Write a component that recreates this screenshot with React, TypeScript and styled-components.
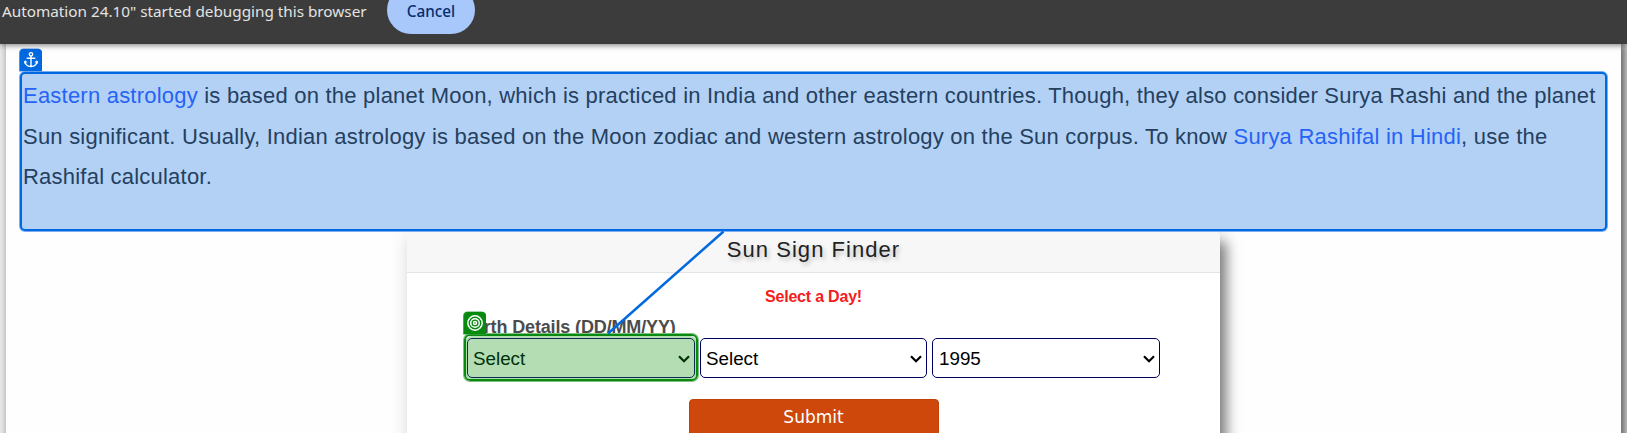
import React from "react";
import styled, { createGlobalStyle, css } from "styled-components";

const GlobalStyle = createGlobalStyle`
  * { box-sizing: border-box; }
  html, body { margin: 0; height: 433px; overflow: hidden; background: #ececec; }
  body { font-family: "Liberation Sans", Arial, sans-serif; }
`;

const Screen = styled.div`
  position: relative;
  display: flex;
  flex-direction: column;
  width: 1627px;
  height: 433px;
  overflow: hidden;
`;

const DebugBar = styled.header`
  position: relative;
  z-index: 3;
  flex: 0 0 44px;
  display: flex;
  align-items: flex-start;
  gap: 21px;
  padding-left: 2px;
  background: #3c3c3c;
  box-shadow: 0 1px 6px rgba(0, 0, 0, 0.55);
  font-family: "Noto Sans", "Open Sans", sans-serif;
`;

const DebugText = styled.span`
  width: 364px;
  line-height: 22px;
  font-size: 15.3px;
  letter-spacing: -0.01px;
  color: #e3e3e3;
  white-space: nowrap;
`;

const CancelButton = styled.button`
  width: 88px;
  height: 48px;
  margin-top: -14px;
  padding: 2px 0 0;
  border: 0;
  border-radius: 24px;
  background: #a8c7fa;
  color: #062e6f;
  font: 500 15.3px "Noto Sans", "Open Sans", sans-serif;
`;

const Page = styled.main`
  flex: 1;
  margin: 0 6px;
  padding: 27px 13px 0;
  background: #fefefe;
  box-shadow: 0 0 8px rgba(0, 0, 0, 0.22), 5px 0 9px rgba(0, 0, 0, 0.5);
`;

const AnchorRegion = styled.section`
  position: relative;
  z-index: 2;
  height: 161px;
  padding: 1px;
  border-radius: 6px;
  background: #79aef0;
`;

const AnchorFill = styled.div`
  height: 159px;
  padding: 2px 0 0 1px;
  border: 2px solid #0068e0;
  border-radius: 5px;
  background: #b3d1f5;
`;

const Intro = styled.p`
  margin: 0;
  font-size: 22px;
  line-height: 40.5px;
  letter-spacing: 0.219px;
  color: #24405f;
  white-space: nowrap;
`;

const TextLink = styled.a`
  color: #2563f5;
`;

const Tag = styled.span<{ $color: string; $edge: string; $top: number; $left: number }>`
  position: absolute;
  z-index: 3;
  top: ${(p) => p.$top}px;
  left: ${(p) => p.$left}px;
  width: 22px;
  height: 22px;
  display: grid;
  place-items: center;
  border-radius: 4px 4px 0 0;
  background: ${(p) => p.$color};
  box-shadow: -0.5px 0 0 0.5px ${(p) => p.$edge};
`;

const Card = styled.section`
  width: 813px;
  height: 300px;
  margin: -1px auto 0 388px;
  border-radius: 6px;
  background: #fff;
  box-shadow: 4px 4px 20px rgba(0, 0, 0, 0.22), 10px 8px 12px -4px rgba(0, 0, 0, 0.4);
`;

const CardHeader = styled.h2`
  height: 42px;
  margin: 0;
  border-bottom: 1px solid #e4e4e4;
  border-radius: 6px 6px 0 0;
  background: #f7f7f7;
  font-size: 22px;
  font-weight: 400;
  line-height: 37px;
  letter-spacing: 1.05px;
  text-align: center;
  color: #212121;
  text-shadow: 2px 3px 4px rgba(0, 0, 0, 0.22);
`;

const ErrorText = styled.p`
  margin: 14px 0 0;
  font-size: 16px;
  font-weight: 700;
  line-height: 20px;
  letter-spacing: -0.2px;
  text-align: center;
  color: #f32020;
`;

const FieldLabel = styled.label`
  display: block;
  margin: 9px 0 0 59px;
  font-size: 18px;
  font-weight: 700;
  line-height: 22px;
  letter-spacing: -0.14px;
  color: #4c4c4c;
`;

const Fields = styled.div`
  display: flex;
  gap: 5px;
  padding-left: 60px;
`;

const Picker = styled.div<{ $marked?: boolean; $width: number; $indent?: number }>`
  position: relative;
  width: ${(p) => p.$width}px;
  height: 40px;
  display: flex;
  align-items: center;
  justify-content: space-between;
  padding: 1px 4px 0 ${(p) => p.$indent ?? 5}px;
  border: 1px solid #00005f;
  border-radius: 5px;
  background: #fff;
  font-size: 18.8px;
  color: #000;
  ${(p) =>
    p.$marked &&
    css`
      background: #b4ddb4;
      border-color: #0a2c51;
      color: #00310a;
      box-shadow: 0 0 0 2px #b4ddb4;
      &::before {
        content: "";
        position: absolute;
        inset: -5px -4px -4px;
        border: 2px solid #078a0d;
        border-radius: 6px;
        box-shadow: 0 0 0 1px #7fc182;
      }
    `}
`;

const SubmitButton = styled.button`
  display: block;
  width: 250px;
  height: 42px;
  margin: 21px auto 0;
  padding: 0 0 6px;
  border: 1px solid #c04208;
  border-radius: 4px;
  background: #cd480a;
  color: #fff;
  font: 400 17px "DejaVu Sans", Verdana, sans-serif;
`;

const Connector = styled.svg`
  position: absolute;
  z-index: 2;
  top: 0;
  left: 0;
  pointer-events: none;
`;

const Chevron = () => (
  <svg width="12" height="8" viewBox="0 0 12 8" fill="none" stroke="currentColor" strokeWidth="2.2">
    <path d="M1 1.2 6 6.2 11 1.2" />
  </svg>
);

const AnchorIcon = () => (
  <svg width="16" height="18" viewBox="0 0 16 18" fill="none" stroke="#fff" strokeWidth="1.4">
    <circle cx="8" cy="3.3" r="1.7" />
    <path d="M8 5v10.5M3.6 7.3h8.800M2 10.2c.3 3.2 2.5 5.2 6 5.4 3.5-.2 5.7-2.2 6-5.4" />
    <path d="M1.4 12.5 2 9.8l2.3 1.7M14.6 12.5 14 9.8l-2.3 1.7" strokeWidth="1" />
  </svg>
);

const TargetIcon = () => (
  <svg width="18" height="18" viewBox="0 0 18 18" fill="none" stroke="#fff" strokeWidth="1.5">
    <circle cx="9" cy="9" r="7.2" />
    <circle cx="9" cy="9" r="4.3" />
    <circle cx="9" cy="9" r="1.5" />
  </svg>
);

export default function App() {
  return (
    <>
      <GlobalStyle />
      <Screen>
        <DebugBar>
          <DebugText>Automation 24.10" started debugging this browser</DebugText>
          <CancelButton>Cancel</CancelButton>
        </DebugBar>
        <Page>
          <AnchorRegion>
            <AnchorFill>
              <Intro>
                <TextLink>Eastern astrology</TextLink> is based on the planet Moon, which is practiced in India and
                other eastern countries. Though, they also consider Surya Rashi and the planet
                <br />
                Sun significant. Usually, Indian astrology is based on the Moon zodiac and western astrology on the Sun
                corpus. To know <TextLink>Surya Rashifal in Hindi</TextLink>, use the
                <br />
                Rashifal calculator.
              </Intro>
            </AnchorFill>
            <Tag $color="#0068e0" $edge="#4d95ea" $top={-22} $left={1}>
              <AnchorIcon />
            </Tag>
          </AnchorRegion>
          <Card>
            <CardHeader>Sun Sign Finder</CardHeader>
            <ErrorText>Select a Day!</ErrorText>
            <FieldLabel>Birth Details (DD/MM/YY)</FieldLabel>
            <Fields>
              <Picker $marked $width={228}>
                Select
                <Chevron />
                <Tag $color="#078a0d" $edge="#4fa955" $top={-27} $left={-4}>
                  <TargetIcon />
                </Tag>
              </Picker>
              <Picker $width={227}>
                Select
                <Chevron />
              </Picker>
              <Picker $width={228} $indent={6}>
                1995
                <Chevron />
              </Picker>
            </Fields>
            <SubmitButton>Submit</SubmitButton>
          </Card>
        </Page>
        <Connector width="1627" height="433" viewBox="0 0 1627 433">
          <path d="M723.5 231.5 608 333.5" stroke="#0068e0" strokeWidth="2.5" />
        </Connector>
      </Screen>
    </>
  );
}
